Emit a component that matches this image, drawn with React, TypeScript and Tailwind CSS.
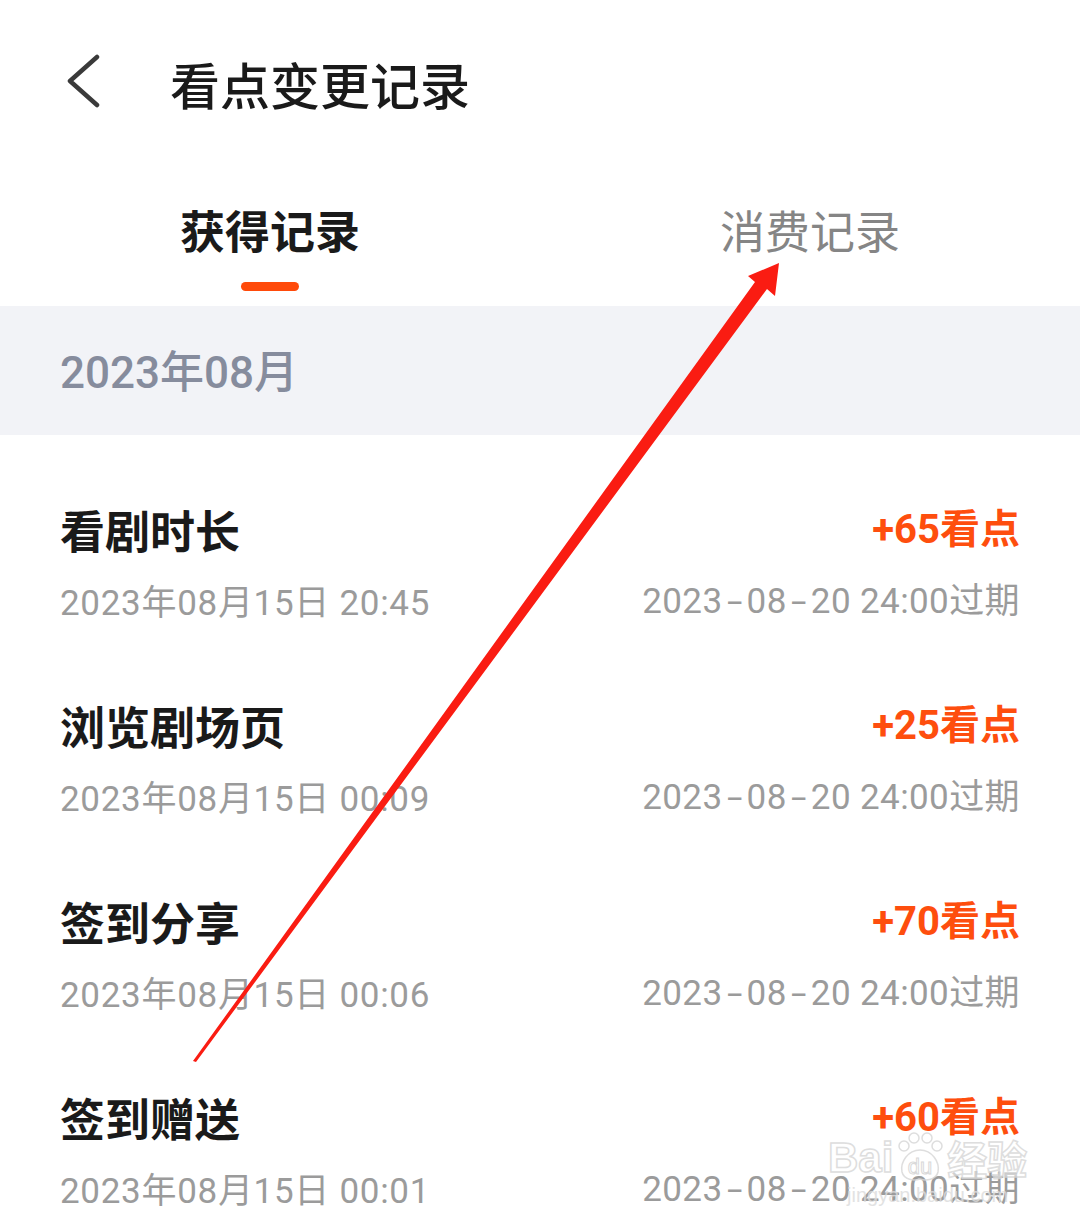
const records = [
  { title: "看剧时长", time: "2023年08月15日 20:45", points: "+65看点" },
  { title: "浏览剧场页", time: "2023年08月15日 00:09", points: "+25看点" },
  { title: "签到分享", time: "2023年08月15日 00:06", points: "+70看点" },
  { title: "签到赠送", time: "2023年08月15日 00:01", points: "+60看点" },
];

// the app draws wide dashes in the expiry date
const Expire = ({ text }: { text: string }) => {
  const parts = text.split("-");
  return (
    <p className="text-[35px] leading-[44px] text-[#9b9b9b] tracking-[0.4px] font-['Roboto','Noto_Sans_CJK_SC',sans-serif]">
      {parts.map((p, i) => (
        <span key={i}>
          {i > 0 && <span className="inline-block mx-[7px] scale-x-[1.6]">-</span>}
          {p}
        </span>
      ))}
    </p>
  );
};

const RecordRow = ({ title, time, points }: { title: string; time: string; points: string }) => {
  return (
    <div className="h-[196px] px-[60px] pt-[67px] flex flex-row justify-between">
      <div className="flex flex-col gap-[24px]">
        <h4 className="text-[45px] leading-[56px] font-bold text-[#1a1a1a]">{title}</h4>
        <p className="text-[35px] leading-[44px] text-[#9b9b9b] tracking-[0.7px] font-['Roboto','Noto_Sans_CJK_SC',sans-serif]">{time}</p>
      </div>
      <div className="flex flex-col items-end gap-[22px]">
        <h4 className="text-[40px] leading-[56px] font-bold text-[#fe4e0e] font-['Roboto','Noto_Sans_CJK_SC',sans-serif]">{points}</h4>
        <Expire text="2023-08-20 24:00过期" />
      </div>
    </div>
  );
};

export default function App() {
  return (
    <div className="relative w-[1080px] h-[1229px] overflow-hidden bg-white font-['Noto_Sans_CJK_SC',sans-serif]">
      {/* header */}
      <div className="h-[166px] flex flex-row items-center pl-[64px]">
        <svg width="40" height="56" viewBox="0 0 40 56" className="mb-[2px]">
          <polyline points="33,3 6,27 33,51" fill="none" stroke="#3a3a3a" strokeWidth="4.5" strokeLinecap="round" strokeLinejoin="round" />
        </svg>
        <h1 className="ml-[66px] text-[50px] leading-[60px] font-medium text-[#1a1a1a]">看点变更记录</h1>
      </div>

      {/* tabs */}
      <div className="h-[140px] flex flex-row">
        <div className="flex-1 flex flex-col items-center pt-[36px]">
          <span className="text-[45px] leading-[56px] font-bold text-[#1a1a1a]">获得记录</span>
          <span className="mt-[24px] w-[58px] h-[9px] rounded-full bg-[#ff4a0a]" />
        </div>
        <div className="flex-1 flex flex-col items-center pt-[36px]">
          <span className="text-[45px] leading-[56px] text-[#858585]">消费记录</span>
        </div>
      </div>

      {/* month */}
      <div className="h-[129px] bg-[#f2f3f7] flex items-center px-[60px]">
        <span className="text-[44px] leading-[56px] font-medium text-[#868c9d] mt-[4px] font-['Roboto','Noto_Sans_CJK_SC',sans-serif]">2023年08月</span>
      </div>

      <div className="flex flex-col">
        {records.map((r) => (
          <RecordRow key={r.title} title={r.title} time={r.time} points={r.points} />
        ))}
      </div>

      {/* watermark */}
      <div className="absolute left-[828px] top-[1132px] flex flex-col items-center opacity-80 pointer-events-none">
        <div className="flex flex-row items-center">
          <span className="text-[42px] leading-[50px] font-bold text-white/70 [-webkit-text-stroke:1.5px_#d6d6d6] font-['Liberation_Sans',sans-serif]">Bai</span>
          <svg width="52" height="52" viewBox="0 0 52 52" className="mx-[1px]">
            <g fill="none" stroke="#d6d6d6" strokeWidth="1.5">
              <circle cx="10" cy="14" r="5" />
              <circle cx="20" cy="6" r="5" />
              <circle cx="33" cy="6" r="5" />
              <circle cx="43" cy="14" r="5" />
              <path d="M26 18 C14 18 6 30 8 40 C10 48 20 49 26 47 C32 49 42 48 44 40 C46 30 38 18 26 18 Z" />
            </g>
            <text x="26" y="42" textAnchor="middle" fontSize="22" fontFamily="Liberation Sans" fill="white" stroke="#d0d0d0" strokeWidth="1">du</text>
          </svg>
          <span className="text-[40px] leading-[50px] font-bold text-white/70 [-webkit-text-stroke:1.5px_#d6d6d6]">经验</span>
        </div>
        <span className="text-[20px] leading-[22px] text-[#dcdcdc] font-['Liberation_Sans',sans-serif]">jingyan.baidu.com</span>
      </div>

      {/* red annotation arrow */}
      <svg className="absolute left-0 top-0 pointer-events-none" width="1080" height="1229" viewBox="0 0 1080 1229">
        <polygon
          points="779,263 775,296 767,289 196,1062 193,1061 755,282 748,276"
          fill="#fa1c12"
        />
      </svg>
    </div>
  );
}
